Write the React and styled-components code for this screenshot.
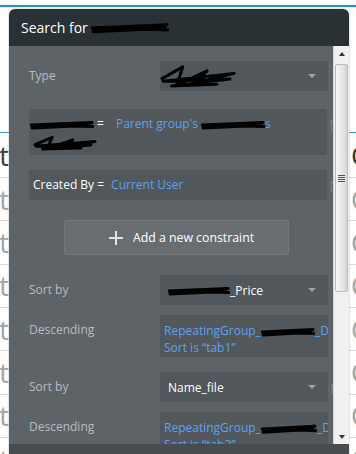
import React from "react";
import styled, { createGlobalStyle } from "styled-components";

const GlobalStyle = createGlobalStyle`
  html, body {
    margin: 0;
    padding: 0;
    background: #fff;
  }
  body {
    font-family: "Open Sans", "DejaVu Sans", sans-serif;
  }
`;

// marker-pen redaction drawn over private names
const scribblePath = (w, h, messy) =>
  messy
    ? [
        `M2 ${h * 0.6}`,
        `L${w * 0.3} ${h * 0.15}`,
        `L${w * 0.22} ${h * 0.85}`,
        `L${w * 0.62} ${h * 0.3}`,
        `L${w * 0.45} ${h * 0.78}`,
        `L${w - 2} ${h * 0.4}`,
        `L3 ${h * 0.7}`,
        `L${w - 6} ${h * 0.62}`,
        `L${w * 0.15} ${h * 0.88}`,
        `L${w * 0.75} ${h * 0.82}`,
      ].join(" ")
    : [
        `M1 ${h * 0.5}`,
        `L${w - 2} ${h * 0.3}`,
        `L3 ${h * 0.62}`,
        `L${w - 4} ${h * 0.46}`,
        `L2 ${h * 0.74}`,
        `L${w * 0.7} ${h * 0.58}`,
        `L${w - 1} ${h * 0.62}`,
      ].join(" ");

const Scribble = ({ w, h = 14, ml = 0, messy }) => (
  <Ink width={w} height={h} viewBox={`0 0 ${w} ${h}`} style={{ marginLeft: ml }}>
    <path
      d={scribblePath(w, h, messy)}
      fill="none"
      stroke="#000"
      strokeWidth="3"
      strokeLinecap="round"
      strokeLinejoin="round"
    />
  </Ink>
);

const Trash = () => (
  <TrashIcon width="10" height="12" viewBox="0 0 10 12">
    <path d="M1 2.5h8M3.5 2.5V1h3v1.5M2 2.5l.6 9h4.8l.6-9" fill="none" stroke="#7f8488" strokeWidth="1" />
  </TrashIcon>
);

const App = () => {
  const rows = [0, 1, 2, 3, 4, 5, 6, 7];
  return (
    <Page>
      <GlobalStyle />
      <TopLine />
      <Table>
        {rows.map((r) => (
          <Row key={r} first={r === 0}>
            <LeftCell>
              <span>Text</span>
            </LeftCell>
            <RightCell>Col</RightCell>
          </Row>
        ))}
      </Table>

      <Panel>
        <Header>
          Search for&nbsp;
          <Scribble w={78} h={16} />
        </Header>
        <Body>
          <Content>
            <Field>
              <Label>Type</Label>
              <Select>
                <Scribble w={76} h={26} ml={-8} messy />
                <Caret />
              </Select>
            </Field>

            <Field mt={18}>
              <Constraint>
                <Scribble w={64} h={12} ml={-3} />
                <Key> =</Key>
                <Value gap={12}>
                  Parent group's <Scribble w={64} h={12} />s <Scribble w={64} h={16} messy />
                </Value>
              </Constraint>
              <Trash />
            </Field>

            <Field mt={15}>
              <Constraint>
                <Key>Created By =</Key>
                <Value gap={7}>Current User</Value>
              </Constraint>
              <Trash />
            </Field>

            <AddButton>
              <Plus />
              Add a new constraint
            </AddButton>

            <Field mt={20}>
              <Label>Sort by</Label>
              <Select>
                <span>
                  <Scribble w={62} h={12} />
                  _Price
                </span>
                <Caret />
              </Select>
            </Field>

            <Field mt={10}>
              <Label>Descending</Label>
              <Expr>
                <Line>
                  RepeatingGroup_
                  <Scribble w={54} h={12} />
                  _Details's
                </Line>
                <Line>Sort is “tab1”</Line>
              </Expr>
            </Field>

            <Field mt={15}>
              <Label>Sort by</Label>
              <Select>
                <span>Name_file</span>
                <Caret />
              </Select>
              <Trash />
            </Field>

            <Field mt={10}>
              <Label>Descending</Label>
              <Expr>
                <Line>
                  RepeatingGroup_
                  <Scribble w={56} h={14} />
                  _Details's
                </Line>
                <Line>Sort is “tab2”</Line>
              </Expr>
            </Field>
          </Content>
          <ScrollBar>
            <ArrowCell>
              <ArrowUp />
            </ArrowCell>
            <Thumb>
              <Grip>
                <i />
                <i />
                <i />
                <i />
              </Grip>
            </Thumb>
            <Track />
            <ArrowCell down>
              <ArrowDown />
            </ArrowCell>
          </ScrollBar>
        </Body>
        <Footer />
      </Panel>
    </Page>
  );
};

export default App;

const Page = styled.div`
  position: relative;
  width: 356px;
  height: 454px;
  overflow: hidden;
  background: #fff;
`;
const TopLine = styled.div`
  margin-top: 5px;
  height: 2px;
  background: #2b8ccf;
`;
const Table = styled.div`
  margin-top: 125px;
  border-top: 1px solid #3a92d6;
`;
const Row = styled.div`
  height: ${({ first }) => (first ? "44px" : "42.33px")};
  border-bottom: 1px solid #dcdcdc;
  display: flex;
  align-items: center;
  justify-content: space-between;
  font-family: "Open Sans", sans-serif;
  font-size: 27px;
  color: ${({ first }) => (first ? "#3a3a3a" : "#a3a3a3")};
`;
const LeftCell = styled.div`
  width: 9px;
  overflow: hidden;
  display: flex;
  justify-content: flex-end;
  white-space: nowrap;
`;
const RightCell = styled.div`
  width: 5px;
  overflow: hidden;
  white-space: nowrap;
`;
const Panel = styled.div`
  position: absolute;
  left: 9px;
  top: 9px;
  width: 340px;
  height: 460px;
  border-radius: 6px 6px 0 0;
  overflow: hidden;
  display: flex;
  flex-direction: column;
  box-shadow: 0 0 2px rgba(0, 0, 0, 0.35);
`;
const Header = styled.div`
  flex: none;
  height: 37px;
  background: #2a3135;
  color: #fff;
  font-size: 14px;
  display: flex;
  align-items: center;
  padding-left: 12px;
`;
const Body = styled.div`
  flex: none;
  height: 398px;
  display: flex;
  background: #5e6367;
`;
const Content = styled.div`
  flex: 1;
  min-width: 0;
  overflow: hidden;
  padding: 15px 0 0 20px;
  display: flex;
  flex-direction: column;
  font-size: 12px;
`;
const Field = styled.div`
  display: flex;
  align-items: flex-start;
  flex: none;
  margin-top: ${({ mt }) => mt || 0}px;
`;
const Label = styled.div`
  width: 131px;
  flex: none;
  height: 30px;
  line-height: 30px;
  color: #b7bcc0;
`;
const Select = styled.div`
  width: 168px;
  height: 30px;
  flex: none;
  box-sizing: border-box;
  padding: 0 12px 0 8px;
  background: #52575b;
  color: #fff;
  display: flex;
  align-items: center;
  justify-content: space-between;
  white-space: nowrap;
`;
const Caret = styled.span`
  width: 0;
  height: 0;
  border-left: 4px solid transparent;
  border-right: 4px solid transparent;
  border-top: 4px solid #9ca1a5;
`;
const Constraint = styled.div`
  width: 298px;
  min-height: 30px;
  flex: none;
  box-sizing: border-box;
  padding: 6px 4px 4px;
  background: #52575b;
  line-height: 18px;
`;
const Key = styled.span`
  color: #fff;
`;
const Value = styled.span`
  color: #5ea2f2;
  margin-left: ${({ gap }) => gap}px;
`;
const Ink = styled.svg`
  display: inline-block;
  vertical-align: middle;
`;
const TrashIcon = styled.svg`
  flex: none;
  margin: 10px 0 0 2px;
`;
const Expr = styled.div`
  width: 168px;
  flex: none;
  box-sizing: border-box;
  padding: 7px 0 1px 4px;
  background: #52575b;
  color: #5ea2f2;
  line-height: 17px;
`;
const Line = styled.div`
  max-width: 169px;
  overflow: hidden;
  white-space: nowrap;
`;
const AddButton = styled.div`
  flex: none;
  margin: 20px 0 0 35px;
  width: 225px;
  height: 35px;
  box-sizing: border-box;
  padding-left: 10px;
  background: #686d71;
  border: 1px solid #73787c;
  border-radius: 2px;
  color: #fff;
  font-size: 12.3px;
  display: flex;
  align-items: center;
  justify-content: center;
  gap: 10px;
`;
const Plus = styled.span`
  position: relative;
  width: 14px;
  height: 14px;
  &::before,
  &::after {
    content: "";
    position: absolute;
    background: #e2e2e2;
  }
  &::before {
    left: 0;
    right: 0;
    top: 6px;
    height: 2.4px;
  }
  &::after {
    top: 0;
    bottom: 0;
    left: 6px;
    width: 2.4px;
  }
`;
const ScrollBar = styled.div`
  width: 16px;
  flex: none;
  box-sizing: border-box;
  background: #f0f0f0;
  border-left: 1px solid #d6d6d6;
  display: flex;
  flex-direction: column;
  align-items: center;
`;
const ArrowCell = styled.div`
  height: ${({ down }) => (down ? 14 : 16)}px;
  flex: none;
  display: flex;
  align-items: center;
  justify-content: center;
`;
const ArrowUp = styled.span`
  border-left: 3.5px solid transparent;
  border-right: 3.5px solid transparent;
  border-bottom: 4px solid #333;
`;
const ArrowDown = styled.span`
  border-left: 3.5px solid transparent;
  border-right: 3.5px solid transparent;
  border-top: 4px solid #333;
`;
const Thumb = styled.div`
  width: 13px;
  height: 228px;
  flex: none;
  margin-top: 2px;
  box-sizing: border-box;
  border: 1px solid #b9b9b9;
  border-radius: 2px;
  background: linear-gradient(to right, #f6f6f6, #e2e2e2 70%, #d2d2d2);
  display: flex;
  align-items: center;
  justify-content: center;
`;
const Grip = styled.div`
  display: flex;
  flex-direction: column;
  gap: 1px;
  i {
    display: block;
    width: 7px;
    height: 1px;
    background: #555;
  }
`;
const Track = styled.div`
  flex: 1;
`;
const Footer = styled.div`
  flex: 1;
  background: #474c50;
`;
